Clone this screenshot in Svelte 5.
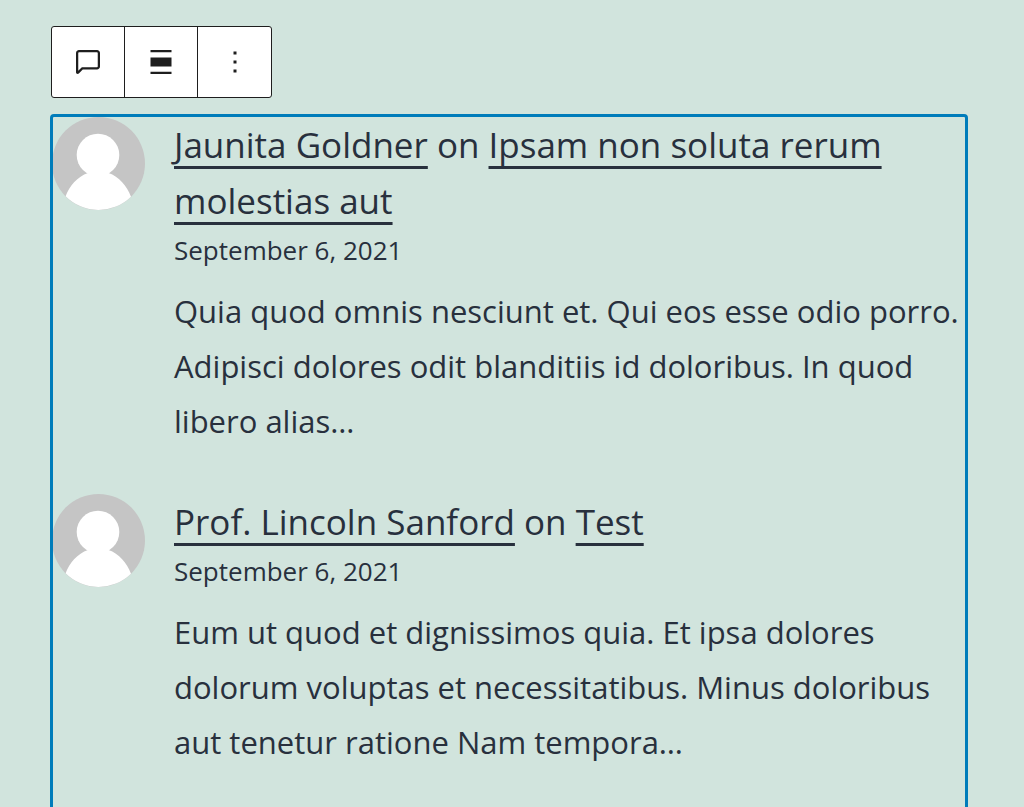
<script>
  const comments = [
    {
      author: "Jaunita Goldner",
      post: "Ipsam non soluta rerum molestias aut",
      date: "September 6, 2021",
      datetime: "2021-09-06",
      excerpt: "Quia quod omnis nesciunt et. Qui eos esse odio porro. Adipisci dolores odit blanditiis id doloribus. In quod libero alias…",
    },
    {
      author: "Prof. Lincoln Sanford",
      post: "Test",
      date: "September 6, 2021",
      datetime: "2021-09-06",
      excerpt: "Eum ut quod et dignissimos quia. Et ipsa dolores dolorum voluptas et necessitatibus. Minus doloribus aut tenetur ratione Nam tempora…",
    },
  ];

  const tools = [
    {
      label: "Latest Comments",
      path: "M18 4H6c-1.1 0-2 .9-2 2v12.9c0 .6.5 1.1 1.1 1.1.3 0 .5-.1.8-.3L8.5 17H18c1.1 0 2-.9 2-2V6c0-1.1-.9-2-2-2zm.5 11c0 .3-.2.5-.5.5H7.9l-2.4 2.4V6c0-.3.2-.5.5-.5h12c.3 0 .5.2.5.5v9z",
    },
    {
      label: "Align",
      path: "M5 4h14v1.5H5zM5 9h14v6H5zM5 18.5h14V20H5z",
    },
    {
      label: "Options",
      path: "M13 19h-2v-2h2v2zm0-6h-2v-2h2v2zm0-6h-2V5h2v2z",
    },
  ];
</script>

<main>
  <div class="toolbar" role="toolbar" aria-label="Block tools">
    {#each tools as tool}
      <button type="button" aria-label={tool.label}>
        <svg viewBox="0 0 24 24" aria-hidden="true"><path d={tool.path} /></svg>
      </button>
    {/each}
  </div>

  <ol class="comments">
    {#each comments as comment}
      <li>
        <svg class="avatar" viewBox="0 0 93 93" aria-hidden="true">
          <circle cx="46.5" cy="46.5" r="46.5" fill="#c5c5c5" />
          <circle cx="46" cy="38" r="21.3" fill="#fff" />
          <path d="M13.600 79.300C17.500 69 25.500 59.500 36 56V50h20.500v6C67 59.500 75 69 79 79.700A46.500 46.500 0 0 1 13.600 79.300z" fill="#fff" />
        </svg>
        <article>
          <header>
            <p class="title"><a href="#author">{comment.author}</a> on <a href="#post">{comment.post}</a></p>
            <time datetime={comment.datetime}>{comment.date}</time>
          </header>
          <p class="excerpt">{comment.excerpt}</p>
        </article>
      </li>
    {/each}
  </ol>
</main>

<style>
  :global(body) {
    background: #d1e4dd;
  }

  main {
    padding: 26px 58px 0 51px;
    color: #28303d;
    font-family: "Segoe UI", "Open Sans", sans-serif;
  }

  .toolbar {
    display: inline-flex;
    background: #fff;
    border: 1px solid #1e1e1e;
    border-radius: 3px;
  }

  button {
    display: flex;
    align-items: center;
    justify-content: center;
    width: 73px;
    height: 70px;
    padding: 0;
    background: none;
    border: 0;
    border-right: 1px solid #1e1e1e;
    cursor: pointer;
  }

  button:last-child {
    border-right: 0;
  }

  button svg {
    width: 36px;
    height: 36px;
    fill: #1e1e1e;
  }

  .comments {
    margin: 18px 0 0 1px;
    padding: 1px 0 0;
    list-style: none;
    outline: 3px solid #007cba;
    outline-offset: -1px;
    border-radius: 2px;
  }

  li {
    display: flex;
    align-items: flex-start;
    gap: 29px;
    padding-bottom: 45px;
  }

  .avatar {
    flex: none;
    width: 93px;
    height: 93px;
  }

  article {
    flex: 1;
  }

  p {
    margin: 0;
  }

  .title {
    font-size: 35px;
    line-height: 56px;
  }

  a {
    color: inherit;
    text-decoration: underline;
    text-decoration-thickness: 3px;
    text-underline-offset: 8px;
  }

  time {
    display: block;
    font-size: 26px;
    line-height: 42px;
  }

  .excerpt {
    margin-top: 13px;
    font-size: 31px;
    line-height: 55px;
  }
</style>
